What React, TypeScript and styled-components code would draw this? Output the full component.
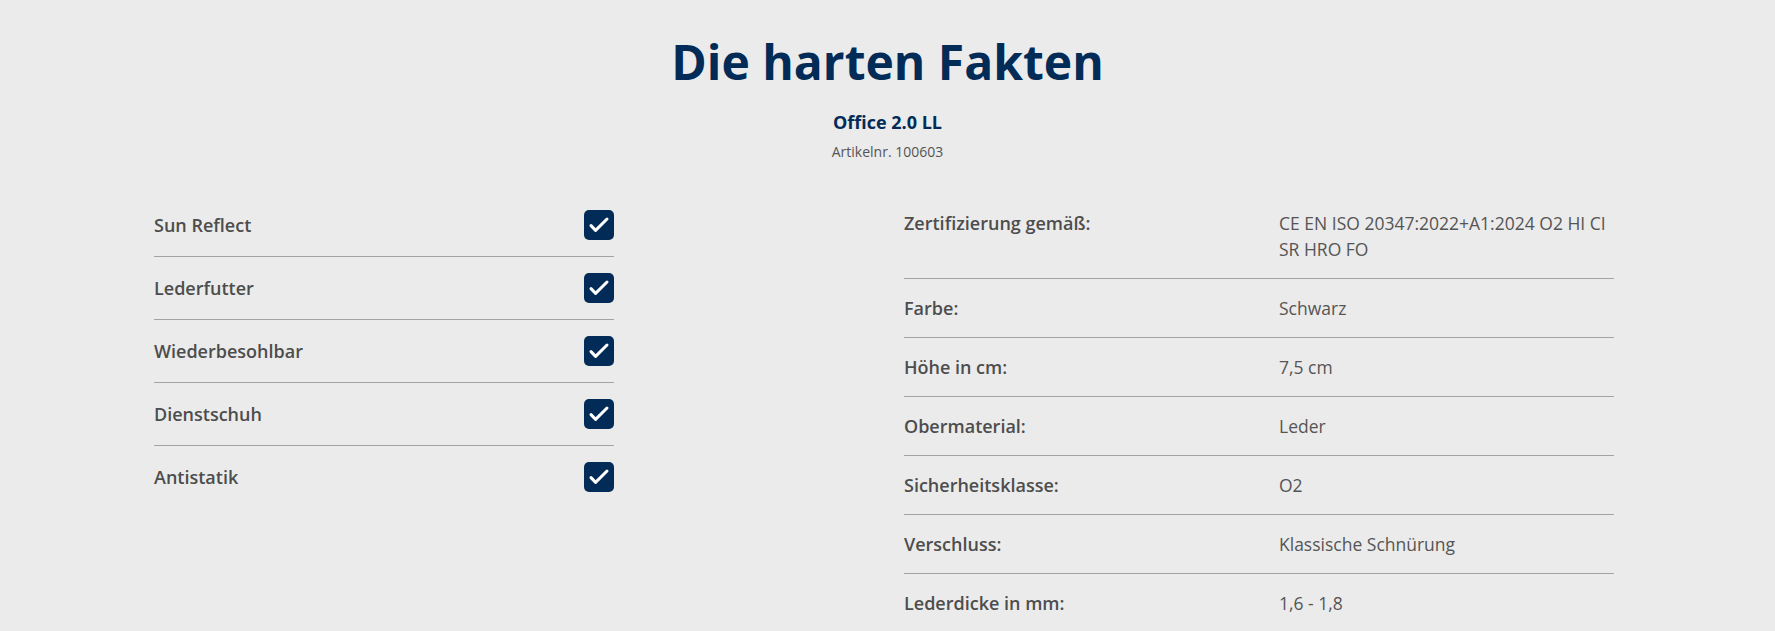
import React from "react"
import styled, { createGlobalStyle } from "styled-components"

const GlobalStyle = createGlobalStyle`
  html, body {
    margin: 0;
    padding: 0;
    background: #ebebeb;
    font-family: "Open Sans", "Liberation Sans", sans-serif;
  }
`

const features = [
  "Sun Reflect",
  "Lederfutter",
  "Wiederbesohlbar",
  "Dienstschuh",
  "Antistatik",
]

const specs: [string, string][] = [
  ["Zertifizierung gemäß:", "CE EN ISO 20347:2022+A1:2024 O2 HI CI SR HRO FO"],
  ["Farbe:", "Schwarz"],
  ["Höhe in cm:", "7,5 cm"],
  ["Obermaterial:", "Leder"],
  ["Sicherheitsklasse:", "O2"],
  ["Verschluss:", "Klassische Schnürung"],
  ["Lederdicke in mm:", "1,6 - 1,8"],
]

const Section = styled.section`
  padding-top: 32px;
  padding-bottom: 40px;
`

const Header = styled.header`
  text-align: center;
`

const Title = styled.h1`
  margin: 0;
  font-size: 48px;
  line-height: 60px;
  font-weight: 700;
  color: #022b57;
`

const Model = styled.div`
  margin-top: 18px;
  font-size: 18px;
  line-height: 25px;
  font-weight: 700;
  color: #022b57;
`

const ArticleNo = styled.div`
  margin-top: 8px;
  font-size: 14px;
  line-height: 18px;
  color: #555;
`

const Columns = styled.div`
  display: grid;
  grid-template-columns: 460px 710px;
  column-gap: 290px;
  align-items: start;
  margin-top: 33px;
  padding-left: 154px;
`

const FeatureList = styled.ul`
  list-style: none;
  margin: 0;
  padding: 0;
`

const FeatureRow = styled.li`
  display: flex;
  align-items: center;
  justify-content: space-between;
  padding: 16px 0;
  border-bottom: 1px solid #a3a3a3;
  font-size: 18px;
  line-height: 26px;
  font-weight: 600;
  color: #4d4d4d;

  &:last-child {
    border-bottom: none;
  }
`

const CheckBox = styled.span`
  display: flex;
  align-items: center;
  justify-content: center;
  width: 30px;
  height: 30px;
  border-radius: 5px;
  background: #022b57;
`

const SpecTable = styled.dl`
  margin: 0;
`

const SpecRow = styled.div`
  display: grid;
  grid-template-columns: 375px 335px;
  padding: 16px 0;
  border-bottom: 1px solid #a3a3a3;
  font-size: 18px;
  line-height: 26px;
  color: #4d4d4d;
`

const SpecLabel = styled.dt`
  margin: 0;
  font-weight: 600;
`

const SpecValue = styled.dd`
  margin: 0;
  font-size: 17.5px;
  font-weight: 400;
  color: #555;
`

const Check = () => (
  <svg width="30" height="30" viewBox="0 0 30 30" fill="none">
    <path
      d="M7 15.6L11.6 20.4L23 9"
      stroke="#fff"
      strokeWidth="3"
      strokeLinecap="round"
      strokeLinejoin="round"
    />
  </svg>
)

const App = () => (
  <>
    <GlobalStyle />
    <Section>
      <Header>
        <Title>Die harten Fakten</Title>
        <Model>Office 2.0 LL</Model>
        <ArticleNo>Artikelnr. 100603</ArticleNo>
      </Header>
      <Columns>
        <FeatureList>
          {features.map(f => (
            <FeatureRow key={f}>
              {f}
              <CheckBox>
                <Check />
              </CheckBox>
            </FeatureRow>
          ))}
        </FeatureList>
        <SpecTable>
          {specs.map(([label, value]) => (
            <SpecRow key={label}>
              <SpecLabel>{label}</SpecLabel>
              <SpecValue>{value}</SpecValue>
            </SpecRow>
          ))}
        </SpecTable>
      </Columns>
    </Section>
  </>
)

export default App
